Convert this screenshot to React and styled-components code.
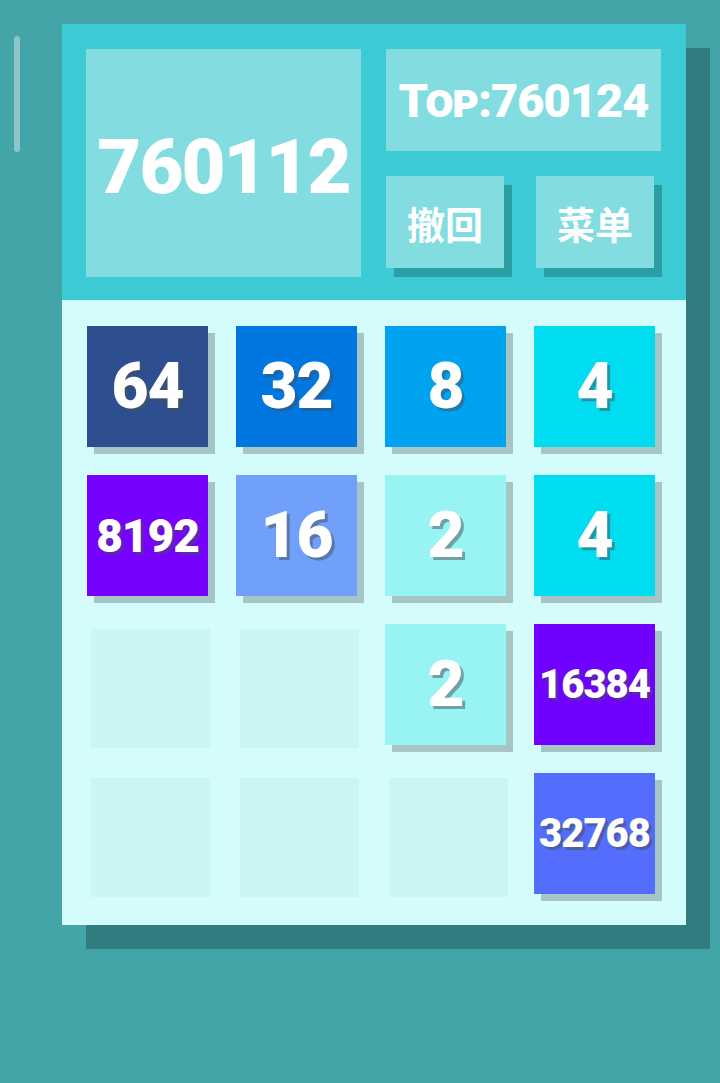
import React from "react";
import styled, { createGlobalStyle } from "styled-components";

const GlobalStyle = createGlobalStyle`
  html, body {
    margin: 0;
    padding: 0;
    background-color: #44a5a8;
    font-family: Roboto, "Noto Sans CJK SC", sans-serif;
  }
`;

const board = [
  [64, 32, 8, 4],
  [8192, 16, 2, 4],
  [0, 0, 2, 16384],
  [0, 0, 0, 32768],
];

const tileColors = {
  2: "#98f3f3",
  4: "#00dcf0",
  8: "#00a3f0",
  16: "#70a0fa",
  32: "#0077e0",
  64: "#2d4e8f",
  8192: "#7700ff",
  16384: "#7000ff",
  32768: "#536dfd",
};

const fontFor = (value) => {
  const len = String(value).length;
  if (len <= 2) return 64;
  if (len === 3) return 54;
  if (len === 4) return 46;
  return 40;
};

const App = () => {
  return (
    <Page>
      <GlobalStyle />
      <ScrollThumb />
      <Card>
        <Header>
          <ScoreBox>760112</ScoreBox>
          <SideColumn>
            <TopBox>Top:760124</TopBox>
            <ButtonRow>
              <HeaderButton>撤回</HeaderButton>
              <HeaderButton>菜单</HeaderButton>
            </ButtonRow>
          </SideColumn>
        </Header>
        <Board>
          {board.flat().map((value, i) =>
            value ? (
              <Tile key={i} $bg={tileColors[value]} $size={fontFor(value)}>
                {value}
              </Tile>
            ) : (
              <Cell key={i}>
                <EmptyCell />
              </Cell>
            )
          )}
        </Board>
      </Card>
    </Page>
  );
};

const Page = styled.div`
  position: relative;
  min-height: 1083px;
  padding: 24px 0 0 62px;
  box-sizing: border-box;
`;

const ScrollThumb = styled.div`
  position: absolute;
  left: 14px;
  top: 36px;
  width: 6px;
  height: 116px;
  border-radius: 3px;
  background-color: rgba(200, 225, 225, 0.55);
`;

const Card = styled.div`
  width: 624px;
  box-shadow: 24px 24px 0 #307d80;
`;

const Header = styled.div`
  display: flex;
  gap: 25px;
  height: 276px;
  padding: 25px 25px 0 24px;
  box-sizing: border-box;
  background-color: #3ccad4;
`;

const ScoreBox = styled.div`
  width: 275px;
  height: 228px;
  display: flex;
  align-items: center;
  justify-content: center;
  padding-top: 8px;
  box-sizing: border-box;
  background-color: #83dcdf;
  color: #fff;
  font-family: Roboto, sans-serif;
  font-weight: 900;
  font-size: 76px;
  letter-spacing: -2px;
`;

const SideColumn = styled.div`
  width: 275px;
  display: flex;
  flex-direction: column;
  gap: 25px;
`;

const TopBox = styled.div`
  height: 102px;
  display: flex;
  align-items: center;
  justify-content: center;
  background-color: #83dcdf;
  color: #fff;
  font-family: Roboto, sans-serif;
  font-weight: 900;
  font-size: 47px;
  font-variant: small-caps;
  letter-spacing: -1px;
`;

const ButtonRow = styled.div`
  display: flex;
  gap: 32px;
`;

const HeaderButton = styled.div`
  width: 118px;
  height: 92px;
  display: flex;
  align-items: center;
  justify-content: center;
  background-color: #83dcdf;
  box-shadow: 8px 9px 0 #2b9ea4;
  color: #fff;
  font-family: "Noto Sans CJK SC", sans-serif;
  font-weight: 700;
  font-size: 38px;
`;

const Board = styled.div`
  display: grid;
  grid-template-columns: repeat(4, 121px);
  grid-auto-rows: 121px;
  column-gap: 28px;
  row-gap: 28px;
  padding: 26px 31px 31px 25px;
  background-color: #d4fcfc;
`;

const Tile = styled.div`
  display: flex;
  align-items: center;
  justify-content: center;
  background-color: ${(p) => p.$bg};
  box-shadow: 7px 7px 0 #a6c6c6;
  color: #fff;
  font-family: Roboto, sans-serif;
  font-weight: 900;
  font-size: ${(p) => p.$size}px;
  letter-spacing: -1px;
  text-shadow: 3px 3px 0 rgba(70, 80, 90, 0.5);
`;

const Cell = styled.div`
  padding: 5px 0 0 4px;
`;

const EmptyCell = styled.div`
  width: 119px;
  height: 119px;
  background-color: #c9f5f4;
`;

export default App;
